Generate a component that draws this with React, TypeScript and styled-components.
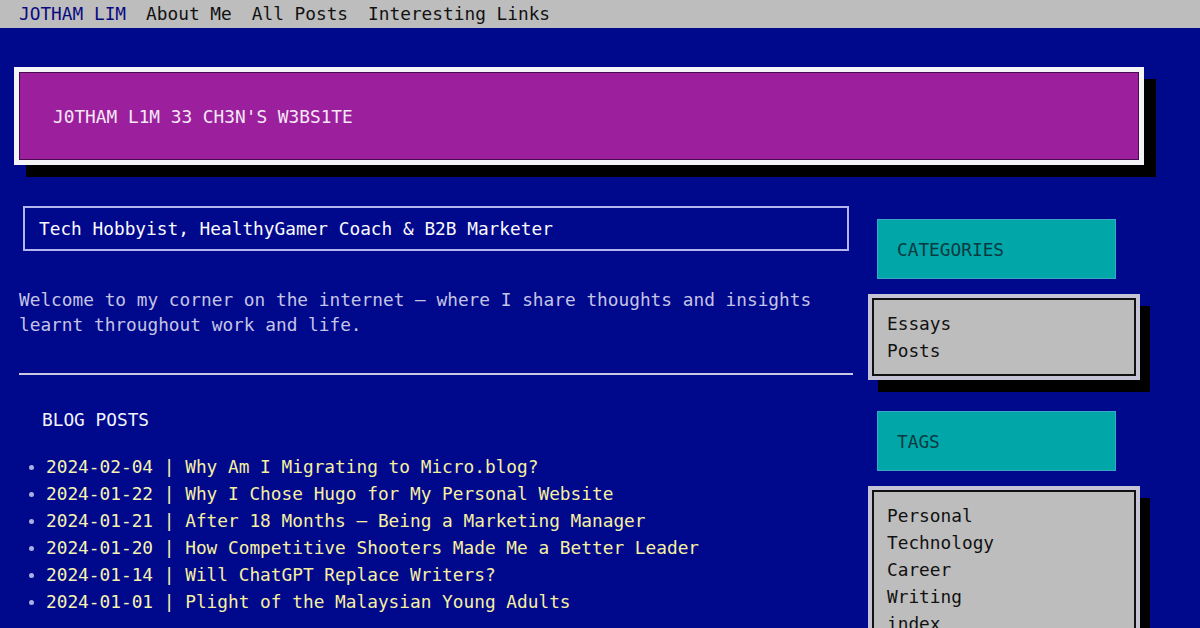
import React from "react";
import styled, { createGlobalStyle } from "styled-components";

const Global = createGlobalStyle`
  html, body {
    margin: 0;
    padding: 0;
    background: #00088c;
    font-family: "DejaVu Sans Mono", "Liberation Mono", monospace;
    font-size: 17.8px;
  }
  * { box-sizing: border-box; }
`;

const Nav = styled.nav`
  display: flex;
  align-items: center;
  gap: 20px;
  height: 28px;
  padding: 0 19px;
  background: #bdbdbd;
  line-height: 28px;
`;

const NavLink = styled.a<{ $brand?: boolean }>`
  color: ${(p) => (p.$brand ? "#0a0a80" : "#111")};
  text-decoration: none;
`;

const Page = styled.div`
  padding: 39px 0 40px 14px;
`;

const Header = styled.header`
  width: 1130px;
  height: 98px;
  border: 5px solid #f4f4f8;
  box-shadow: 12px 12px 0 #000;
`;

const HeaderInner = styled.div`
  height: 100%;
  display: flex;
  align-items: center;
  padding-left: 33px;
  background: #9c209e;
  border: 1px solid #4a0a50;
  color: #f6e8f6;
`;

const Row = styled.div`
  display: flex;
  align-items: flex-start;
  margin-top: 41px;
`;

const Main = styled.main`
  width: 834px;
  margin-left: 5px;
`;

const Subtitle = styled.div`
  margin: 0 4px;
  height: 45px;
  border: 2px solid #b4b4ee;
  padding: 0 14px;
  display: flex;
  align-items: center;
  color: #fafaff;
`;

const Welcome = styled.p`
  margin: 36px 0 0;
  line-height: 25px;
  color: #c4c4e6;
`;

const Rule = styled.hr`
  margin: 36px 0 0;
  border: none;
  height: 2px;
  background: #c8c8e4;
`;

const SectionTitle = styled.h2`
  margin: 32px 0 0 23px;
  font-size: 17.8px;
  font-weight: normal;
  line-height: 25px;
  color: #f4f4ff;
`;

const PostList = styled.ul`
  margin: 21px 0 0;
  padding-left: 27px;
  list-style: disc;
`;

const PostItem = styled.li`
  line-height: 27px;
  color: #f6f3b0;
  &::marker {
    color: #a8b0e0;
    font-size: 16px;
  }
`;

const PostLink = styled.a`
  color: #f6f0a0;
  text-decoration: none;
`;

const Sidebar = styled.aside`
  width: 290px;
  margin-left: 15px;
  padding-top: 13px;
`;

const WidgetTitle = styled.div<{ $gap?: number }>`
  margin-left: 9px;
  margin-top: ${(p) => p.$gap ?? 0}px;
  width: 239px;
  height: 60px;
  background: #00a6a8;
  border: 1px solid #3aa6c8;
  display: flex;
  align-items: center;
  padding-left: 19px;
  color: #0a3a40;
`;

const WidgetBox = styled.div`
  margin-top: 15px;
  width: 272px;
  border: 4px solid #c4c4d6;
  box-shadow: 10px 12px 0 #000;
`;

const WidgetInner = styled.ul`
  margin: 0;
  list-style: none;
  background: #bdbdbd;
  border: 2px solid #111;
  padding: 10px 13px;
`;

const WidgetItem = styled.li`
  line-height: 27px;
  color: #111;
`;

const posts = [
  ["2024-02-04", "Why Am I Migrating to Micro.blog?"],
  ["2024-01-22", "Why I Chose Hugo for My Personal Website"],
  ["2024-01-21", "After 18 Months – Being a Marketing Manager"],
  ["2024-01-20", "How Competitive Shooters Made Me a Better Leader"],
  ["2024-01-14", "Will ChatGPT Replace Writers?"],
  ["2024-01-01", "Plight of the Malaysian Young Adults"],
];

const categories = ["Essays", "Posts"];
const tags = ["Personal", "Technology", "Career", "Writing", "index"];

export default function App() {
  return (
    <>
      <Global />
      <Nav>
        <NavLink $brand href="#">JOTHAM LIM</NavLink>
        <NavLink href="#">About Me</NavLink>
        <NavLink href="#">All Posts</NavLink>
        <NavLink href="#">Interesting Links</NavLink>
      </Nav>
      <Page>
        <Header>
          <HeaderInner>J0THAM L1M 33 CH3N'S W3BS1TE</HeaderInner>
        </Header>
        <Row>
          <Main>
            <Subtitle>Tech Hobbyist, HealthyGamer Coach &amp; B2B Marketer</Subtitle>
            <Welcome>
              Welcome to my corner on the internet – where I share thoughts and insights
              learnt throughout work and life.
            </Welcome>
            <Rule />
            <SectionTitle>BLOG POSTS</SectionTitle>
            <PostList>
              {posts.map(([d, t]) => (
                <PostItem key={d}>
                  {d} | <PostLink href="#">{t}</PostLink>
                </PostItem>
              ))}
            </PostList>
          </Main>
          <Sidebar>
            <WidgetTitle>CATEGORIES</WidgetTitle>
            <WidgetBox>
              <WidgetInner>
                {categories.map((c) => (
                  <WidgetItem key={c}>{c}</WidgetItem>
                ))}
              </WidgetInner>
            </WidgetBox>
            <WidgetTitle $gap={31}>TAGS</WidgetTitle>
            <WidgetBox>
              <WidgetInner>
                {tags.map((c) => (
                  <WidgetItem key={c}>{c}</WidgetItem>
                ))}
              </WidgetInner>
            </WidgetBox>
          </Sidebar>
        </Row>
      </Page>
    </>
  );
}
